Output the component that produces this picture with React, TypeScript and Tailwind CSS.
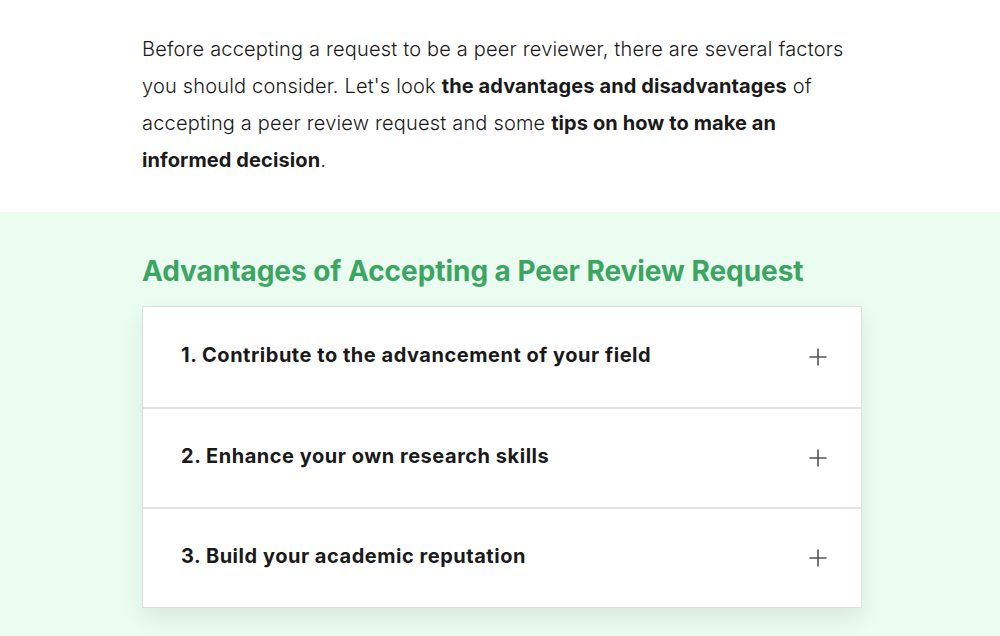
import React from "react";

const items = [
  "1. Contribute to the advancement of your field",
  "2. Enhance your own research skills",
  "3. Build your academic reputation",
];

function Plus() {
  return (
    <svg width="20" height="20" viewBox="0 0 20 20" className="shrink-0">
      <path d="M10 1.5v17M1.5 10h17" stroke="#555" strokeWidth="1.6" fill="none" />
    </svg>
  );
}

export default function App() {
  return (
    <div className="w-[1000px] h-[636px] overflow-hidden bg-white" style={{ fontFamily: "Inter, 'Noto Sans', sans-serif" }}>
      <div className="h-[212px] pt-[31px] pl-[142px]">
        <p className="w-[720px] text-[20px] leading-[37px] text-[#1a1a1a] font-light tracking-[0.18px]">
          Before accepting a request to be a peer reviewer, there are several factors you should consider. Let's look{" "}
          <b className="font-bold tracking-[0.1px]">the advantages and disadvantages</b> of accepting a peer review request and some{" "}
          <b className="font-bold tracking-[0.1px]">tips on how to make an informed decision</b>.
        </p>
      </div>
      <div className="bg-[#ebfcf1] h-[424px] pl-[142px]">
        <h2 className="pt-[37px] text-[28px] leading-[44px] font-bold text-[#3ba562] tracking-[-0.05px]">
          Advantages of Accepting a Peer Review Request
        </h2>
        <div className="mt-[13px] w-[720px] bg-white border border-[#dedede] shadow-[0_10px_20px_rgba(0,0,0,0.08)]">
          {items.map((t, i) => (
            <div
              key={i}
              className={`h-[100px] flex items-center justify-between pl-[38px] pr-[33px] ${i > 0 ? "border-t-2 border-[#e2e2e2]" : ""}`}
            >
              <span className="text-[20px] font-bold text-[#1a1a1a] -mt-[4px] tracking-[0.53px]">{t}</span>
              <Plus />
            </div>
          ))}
        </div>
      </div>
    </div>
  );
}
